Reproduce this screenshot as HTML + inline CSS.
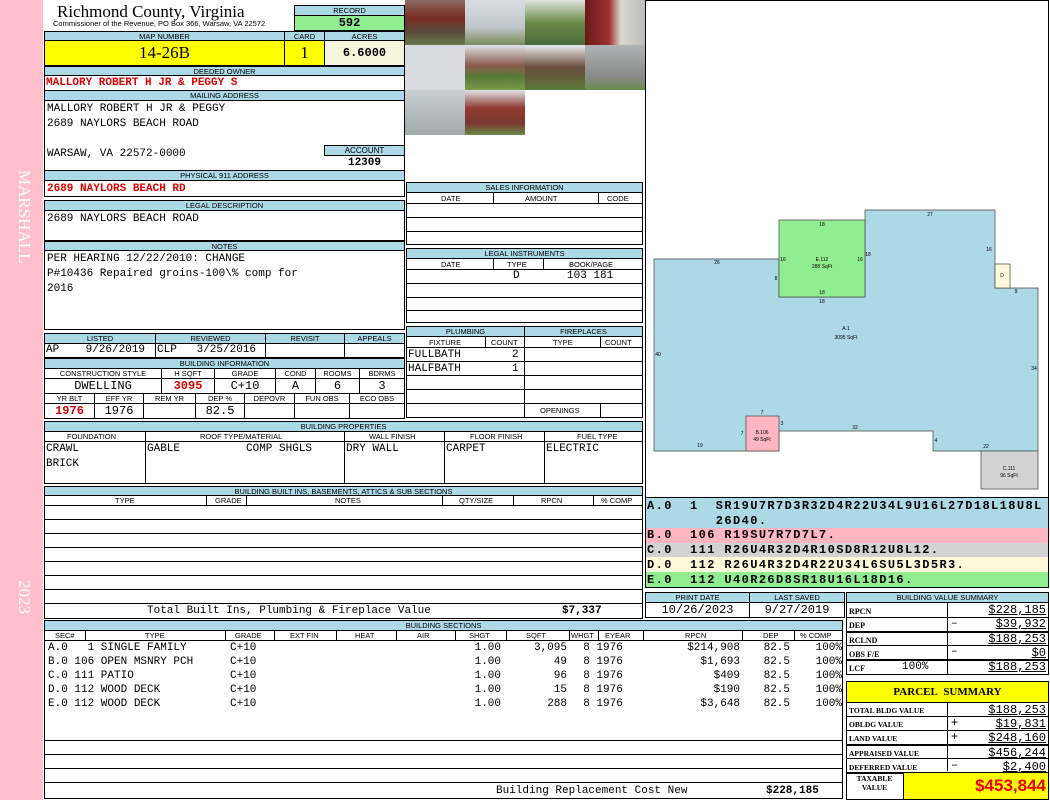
<!DOCTYPE html>
<html><head><meta charset="utf-8"><style>
*{box-sizing:border-box;margin:0;padding:0}
body{width:1050px;height:800px;position:relative;background:#fff;font-family:"Liberation Mono",monospace;overflow:hidden;color:#000}
div{position:absolute}
.h{background:#add8e6;border:1px solid #000;font:7.5px "Liberation Sans",sans-serif;text-align:center;line-height:9px;white-space:nowrap;overflow:hidden}
.b{border:1px solid #000;background:#fff}
.t{font-size:11px;white-space:nowrap;line-height:14px}
.r{color:#d00;font-weight:bold}
.s{font:7.5px "Liberation Sans",sans-serif;white-space:nowrap}
.ln{border-bottom:1px solid #000;left:0;right:0;height:0}
.vl{border-left:1px solid #000;top:0;bottom:0;width:0}
</style></head><body>
<div style="left:0;top:0;width:43px;height:800px;background:#ffc0cb"></div>
<div style="left:10px;top:170px;width:24px;color:#fff;font:17px 'Liberation Serif',serif;writing-mode:vertical-rl">MARSHALL</div>
<div style="left:10px;top:580px;width:24px;color:#fff;font:17px 'Liberation Serif',serif;writing-mode:vertical-rl">2023</div>

<div style="left:57px;top:2px;font:17px 'Liberation Serif',serif">Richmond County, Virginia</div>
<div class="s" style="left:53px;top:19px;font-size:7.5px">Commissioner of the Revenue, PO Box 366, Warsaw, VA 22572</div>
<div class="h" style="left:294px;top:5px;width:111px;height:11px">RECORD</div>
<div style="left:294px;top:15px;width:111px;height:16px;background:#90ee90;border:1px solid #000;text-align:center;font-weight:bold;font-size:12px;line-height:14px">592</div>
<div class="h" style="left:44px;top:31px;width:241px;height:10px">MAP NUMBER</div>
<div class="h" style="left:284px;top:31px;width:41px;height:10px">CARD</div>
<div class="h" style="left:324px;top:31px;width:81px;height:10px">ACRES</div>
<div style="left:44px;top:40px;width:241px;height:26px;background:#ff0;border:1px solid #000;text-align:center;font:17px/24px 'Liberation Serif',serif">14-26B</div>
<div style="left:284px;top:40px;width:41px;height:26px;background:#ff0;border:1px solid #000;text-align:center;font:17px/24px 'Liberation Serif',serif">1</div>
<div style="left:324px;top:40px;width:81px;height:26px;background:#f5f5dc;border:1px solid #000;text-align:center;font-weight:bold;font-size:12px;line-height:24px">6.6000</div>
<div class="h" style="left:44px;top:66px;width:361px;height:10px">DEEDED OWNER</div>
<div class="b" style="left:44px;top:75px;width:361px;height:16px"></div>
<div class="t r" style="left:46px;top:76px">MALLORY ROBERT H JR &amp; PEGGY S</div>
<div class="h" style="left:44px;top:90px;width:361px;height:11px">MAILING ADDRESS</div>
<div class="b" style="left:44px;top:100px;width:361px;height:71px"></div>
<div class="t" style="left:47px;top:102px">MALLORY ROBERT H JR &amp; PEGGY</div>
<div class="t" style="left:47px;top:117px">2689 NAYLORS BEACH ROAD</div>
<div class="t" style="left:47px;top:147px">WARSAW, VA 22572-0000</div>
<div class="h" style="left:324px;top:145px;width:81px;height:11px;font-size:8px">ACCOUNT</div>
<div class="t" style="left:324px;top:156px;width:81px;text-align:center;font-weight:bold">12309</div>
<div class="h" style="left:44px;top:170px;width:361px;height:11px">PHYSICAL 911 ADDRESS</div>
<div class="b" style="left:44px;top:180px;width:361px;height:17px"></div>
<div class="t r" style="left:47px;top:182px">2689 NAYLORS BEACH RD</div>
<div class="h" style="left:44px;top:200px;width:361px;height:11px">LEGAL DESCRIPTION</div>
<div class="b" style="left:44px;top:210px;width:361px;height:31px"></div>
<div class="t" style="left:47px;top:212px">2689 NAYLORS BEACH ROAD</div>
<div class="h" style="left:44px;top:241px;width:361px;height:10px">NOTES</div>
<div class="b" style="left:44px;top:250px;width:361px;height:80px"></div>
<div class="t" style="left:47px;top:252px;line-height:15px">PER HEARING 12/22/2010: CHANGE<br>P#10436 Repaired groins-100\% comp for<br>2016</div>

<div class="h" style="left:44px;top:333px;width:112px;height:11px">LISTED</div>
<div class="h" style="left:155px;top:333px;width:111px;height:11px">REVIEWED</div>
<div class="h" style="left:265px;top:333px;width:80px;height:11px">REVISIT</div>
<div class="h" style="left:344px;top:333px;width:61px;height:11px">APPEALS</div>
<div class="b" style="left:44px;top:343px;width:112px;height:15px"></div>
<div class="b" style="left:155px;top:343px;width:111px;height:15px"></div>
<div class="b" style="left:265px;top:343px;width:80px;height:15px"></div>
<div class="b" style="left:344px;top:343px;width:61px;height:15px"></div>
<div class="t" style="left:46px;top:343px">AP&nbsp;&nbsp;&nbsp;&nbsp;9/26/2019</div>
<div class="t" style="left:157px;top:343px">CLP&nbsp;&nbsp;&nbsp;3/25/2016</div>

<div class="h" style="left:44px;top:358px;width:361px;height:11px">BUILDING INFORMATION</div>
<div class="h" style="left:44px;top:368px;width:118px;height:11px;background:#fff">CONSTRUCTION STYLE</div>
<div class="h" style="left:161px;top:368px;width:54px;height:11px;background:#fff">H SQFT</div>
<div class="h" style="left:214px;top:368px;width:62px;height:11px;background:#fff">GRADE</div>
<div class="h" style="left:275px;top:368px;width:41px;height:11px;background:#fff">COND</div>
<div class="h" style="left:315px;top:368px;width:45px;height:11px;background:#fff">ROOMS</div>
<div class="h" style="left:359px;top:368px;width:46px;height:11px;background:#fff">BDRMS</div>
<div class="b" style="left:44px;top:378px;width:118px;height:16px;text-align:center;font-size:12px">DWELLING</div>
<div class="b r" style="left:161px;top:378px;width:54px;height:16px;text-align:center;font-size:12px">3095</div>
<div class="b" style="left:214px;top:378px;width:62px;height:16px;text-align:center;font-size:12px">C+10</div>
<div class="b" style="left:275px;top:378px;width:41px;height:16px;text-align:center;font-size:12px">A</div>
<div class="b" style="left:315px;top:378px;width:45px;height:16px;text-align:center;font-size:12px">6</div>
<div class="b" style="left:359px;top:378px;width:46px;height:16px;text-align:center;font-size:12px">3</div>
<div class="h" style="left:44px;top:393px;width:51px;height:11px;background:#fff">YR BLT</div>
<div class="h" style="left:94px;top:393px;width:50px;height:11px;background:#fff">EFF YR</div>
<div class="h" style="left:143px;top:393px;width:53px;height:11px;background:#fff">REM YR</div>
<div class="h" style="left:195px;top:393px;width:50px;height:11px;background:#fff">DEP %</div>
<div class="h" style="left:244px;top:393px;width:51px;height:11px;background:#fff">DEPOVR</div>
<div class="h" style="left:294px;top:393px;width:56px;height:11px;background:#fff">FUN OBS</div>
<div class="h" style="left:349px;top:393px;width:56px;height:11px;background:#fff">ECO OBS</div>
<div class="b r" style="left:44px;top:403px;width:51px;height:16px;text-align:center;font-size:12px">1976</div>
<div class="b" style="left:94px;top:403px;width:50px;height:16px;text-align:center;font-size:12px">1976</div>
<div class="b" style="left:143px;top:403px;width:53px;height:16px"></div>
<div class="b" style="left:195px;top:403px;width:50px;height:16px;text-align:center;font-size:12px">82.5</div>
<div class="b" style="left:244px;top:403px;width:51px;height:16px"></div>
<div class="b" style="left:294px;top:403px;width:56px;height:16px"></div>
<div class="b" style="left:349px;top:403px;width:56px;height:16px"></div>

<div style="left:405px;top:0;width:60px;height:45px;background:linear-gradient(#8a6a60,#7a2a22 40%,#5a4a3a 70%,#6a7a4a)"></div>
<div style="left:465px;top:0;width:60px;height:45px;background:linear-gradient(#d8dde0,#c0c8cc 60%,#7a8a5a)"></div>
<div style="left:525px;top:0;width:60px;height:45px;background:linear-gradient(#e0e4e0,#6a8a4a 50%,#4a6a3a)"></div>
<div style="left:585px;top:0;width:60px;height:45px;background:linear-gradient(90deg,#6a1a1a,#a03030 40%,#d8d8d0 60%,#bbb)"></div>
<div style="left:405px;top:45px;width:60px;height:45px;background:#d8dce0"></div>
<div style="left:465px;top:45px;width:60px;height:45px;background:linear-gradient(#dde4ea,#8a5a4a 45%,#5a7a3a 70%,#7a9a4a)"></div>
<div style="left:525px;top:45px;width:60px;height:45px;background:linear-gradient(#e8ecef,#6a4a3a 50%,#5a7a3a)"></div>
<div style="left:585px;top:45px;width:60px;height:45px;background:linear-gradient(#b0b4b4,#8a8a8a 70%,#6a8a4a)"></div>
<div style="left:405px;top:90px;width:60px;height:45px;background:linear-gradient(#c8d0d4,#a0a8a8)"></div>
<div style="left:465px;top:90px;width:60px;height:45px;background:linear-gradient(#e0e4e8,#903a30 40%,#7a3a30 75%,#6a8a4a)"></div>

<div class="h" style="left:406px;top:182px;width:237px;height:11px">SALES INFORMATION</div>
<div class="b" style="left:406px;top:192px;width:237px;height:53px">
<div class="ln" style="top:10px"></div><div class="ln" style="top:24px"></div><div class="ln" style="top:38px"></div>
<div class="vl" style="left:86px;height:10px;bottom:auto"></div><div class="vl" style="left:191px;height:10px;bottom:auto"></div>
<div class="s" style="left:34px;top:1px">DATE</div><div class="s" style="left:118px;top:1px">AMOUNT</div><div class="s" style="left:200px;top:1px">CODE</div></div>
<div class="h" style="left:406px;top:248px;width:237px;height:11px">LEGAL INSTRUMENTS</div>
<div class="b" style="left:406px;top:258px;width:237px;height:65px">
<div class="ln" style="top:10px"></div><div class="ln" style="top:24px"></div><div class="ln" style="top:38px"></div><div class="ln" style="top:51px"></div>
<div class="vl" style="left:86px;height:10px;bottom:auto"></div><div class="vl" style="left:136px;height:10px;bottom:auto"></div>
<div class="s" style="left:34px;top:1px">DATE</div><div class="s" style="left:100px;top:1px">TYPE</div><div class="s" style="left:162px;top:1px">BOOK/PAGE</div>
<div class="t" style="left:106px;top:10px">D</div><div class="t" style="left:160px;top:10px">103 181</div></div>

<div class="h" style="left:406px;top:326px;width:119px;height:11px">PLUMBING</div>
<div class="h" style="left:524px;top:326px;width:119px;height:11px">FIREPLACES</div>
<div class="b" style="left:406px;top:336px;width:237px;height:82px">
<div class="ln" style="top:10px"></div><div class="ln" style="top:24px"></div><div class="ln" style="top:38px"></div><div class="ln" style="top:52px"></div><div class="ln" style="top:66px"></div>
<div class="vl" style="left:117px"></div><div class="vl" style="left:78px;height:10px;bottom:auto"></div><div class="vl" style="left:193px;height:10px;bottom:auto"></div><div class="vl" style="left:193px;top:66px"></div>
<div class="s" style="left:22px;top:1px">FIXTURE</div><div class="s" style="left:84px;top:1px">COUNT</div><div class="s" style="left:146px;top:1px">TYPE</div><div class="s" style="left:198px;top:1px">COUNT</div>
<div class="t" style="left:1px;top:11px">FULLBATH</div><div class="t" style="left:105px;top:11px">2</div>
<div class="t" style="left:1px;top:25px">HALFBATH</div><div class="t" style="left:105px;top:25px">1</div>
<div class="s" style="left:133px;top:69px">OPENINGS</div></div>

<div class="h" style="left:44px;top:421px;width:599px;height:11px">BUILDING PROPERTIES</div>
<div class="b" style="left:44px;top:431px;width:599px;height:53px">
<div class="ln" style="top:9px"></div>
<div class="vl" style="left:100px"></div><div class="vl" style="left:299px"></div><div class="vl" style="left:399px"></div><div class="vl" style="left:499px"></div>
<div class="s" style="left:22px;top:0">FOUNDATION</div><div class="s" style="left:155px;top:0">ROOF TYPE/MATERIAL</div><div class="s" style="left:324px;top:0">WALL FINISH</div><div class="s" style="left:425px;top:0">FLOOR FINISH</div><div class="s" style="left:532px;top:0">FUEL TYPE</div>
<div class="t" style="left:1px;top:10px;line-height:15px">CRAWL<br>BRICK</div>
<div class="t" style="left:102px;top:10px">GABLE</div><div class="t" style="left:201px;top:10px">COMP SHGLS</div>
<div class="t" style="left:301px;top:10px">DRY WALL</div><div class="t" style="left:401px;top:10px">CARPET</div><div class="t" style="left:501px;top:10px">ELECTRIC</div></div>

<div class="h" style="left:44px;top:486px;width:599px;height:10px">BUILDING BUILT INS, BASEMENTS, ATTICS &amp; SUB SECTIONS</div>
<div class="b" style="left:44px;top:495px;width:599px;height:124px">
<div class="ln" style="top:9px"></div><div class="ln" style="top:23px"></div><div class="ln" style="top:37px"></div><div class="ln" style="top:51px"></div><div class="ln" style="top:65px"></div><div class="ln" style="top:79px"></div><div class="ln" style="top:93px"></div><div class="ln" style="top:107px"></div>
<div class="vl" style="left:161px;height:9px;bottom:auto"></div><div class="vl" style="left:201px;height:9px;bottom:auto"></div><div class="vl" style="left:397px;height:9px;bottom:auto"></div><div class="vl" style="left:468px;height:9px;bottom:auto"></div><div class="vl" style="left:548px;height:9px;bottom:auto"></div>
<div class="s" style="left:70px;top:0">TYPE</div><div class="s" style="left:170px;top:0">GRADE</div><div class="s" style="left:290px;top:0">NOTES</div><div class="s" style="left:414px;top:0">QTY/SIZE</div><div class="s" style="left:496px;top:0">RPCN</div><div class="s" style="left:556px;top:0">% COMP</div>
<div class="t" style="left:102px;top:108px">Total Built Ins, Plumbing &amp; Fireplace Value</div>
<div class="t" style="left:517px;top:108px;font-weight:bold">$7,337</div></div>

<div class="h" style="left:44px;top:620px;width:799px;height:11px">BUILDING SECTIONS</div>
<div class="b" style="left:44px;top:630px;width:799px;height:169px">
<div class="ln" style="top:9px"></div><div class="ln" style="top:151px"></div>
<div class="ln" style="top:109px"></div><div class="ln" style="top:123px"></div><div class="ln" style="top:137px"></div>
<div class="vl" style="left:40px;height:9px;bottom:auto"></div><div class="vl" style="left:180px;height:9px;bottom:auto"></div><div class="vl" style="left:229px;height:9px;bottom:auto"></div><div class="vl" style="left:291px;height:9px;bottom:auto"></div><div class="vl" style="left:351px;height:9px;bottom:auto"></div><div class="vl" style="left:410px;height:9px;bottom:auto"></div><div class="vl" style="left:461px;height:9px;bottom:auto"></div><div class="vl" style="left:524px;height:9px;bottom:auto"></div><div class="vl" style="left:553px;height:9px;bottom:auto"></div><div class="vl" style="left:598px;height:9px;bottom:auto"></div><div class="vl" style="left:697px;height:9px;bottom:auto"></div><div class="vl" style="left:749px;height:9px;bottom:auto"></div>
<div class="s" style="left:10px;top:0">SEC#</div><div class="s" style="left:100px;top:0">TYPE</div><div class="s" style="left:190px;top:0">GRADE</div><div class="s" style="left:245px;top:0">EXT FIN</div><div class="s" style="left:310px;top:0">HEAT</div><div class="s" style="left:372px;top:0">AIR</div><div class="s" style="left:424px;top:0">SHGT</div><div class="s" style="left:481px;top:0">SQFT</div><div class="s" style="left:526px;top:0">WHGT</div><div class="s" style="left:560px;top:0">EYEAR</div><div class="s" style="left:640px;top:0">RPCN</div><div class="s" style="left:718px;top:0">DEP</div><div class="s" style="left:755px;top:0">% COMP</div>
<div class="t" style="left:3px;top:10px;line-height:14px;white-space:pre">A.0   1 SINGLE FAMILY
B.0 106 OPEN MSNRY PCH
C.0 111 PATIO
D.0 112 WOOD DECK
E.0 112 WOOD DECK</div>
<div class="t" style="left:185px;top:10px;line-height:14px">C+10<br>C+10<br>C+10<br>C+10<br>C+10</div>
<div class="t" style="left:420px;top:10px;width:36px;text-align:right;line-height:14px">1.00<br>1.00<br>1.00<br>1.00<br>1.00</div>
<div class="t" style="left:460px;top:10px;width:62px;text-align:right;line-height:14px">3,095<br>49<br>96<br>15<br>288</div>
<div class="t" style="left:525px;top:10px;line-height:14px;white-space:pre">  8 1976
  8 1976
  8 1976
  8 1976
  8 1976</div>
<div class="t" style="left:600px;top:10px;width:95px;text-align:right;line-height:14px">$214,908<br>$1,693<br>$409<br>$190<br>$3,648</div>
<div class="t" style="left:700px;top:10px;width:45px;text-align:right;line-height:14px">82.5<br>82.5<br>82.5<br>82.5<br>82.5</div>
<div class="t" style="left:750px;top:10px;width:47px;text-align:right;line-height:14px">100%<br>100%<br>100%<br>100%<br>100%</div>
<div class="t" style="left:451px;top:153px">Building Replacement Cost New</div>
<div class="t" style="left:721px;top:153px;font-weight:bold">$228,185</div></div>

<div class="b" style="left:645px;top:0;width:404px;height:498px"></div>
<svg style="position:absolute;left:0;top:0" width="1050" height="500" font-family="Liberation Sans" font-size="5">
<polygon points="654,259 779,259 779,297 865,297 865,210 995,210 995,288 1038,288 1038,451 933,451 933,431 779,431 779,451 654,451" fill="#add8e6" stroke="#444" stroke-width=".7"/>
<rect x="779" y="220" width="86" height="77" fill="#90ee90" stroke="#444" stroke-width=".7"/>
<rect x="746" y="416" width="33" height="35" fill="#ffb6c1" stroke="#444" stroke-width=".7"/>
<rect x="995" y="264" width="15" height="24" fill="#fffadc" stroke="#444" stroke-width=".7"/>
<rect x="981" y="451" width="57" height="38" fill="#d3d3d3" stroke="#444" stroke-width=".7"/>
<g text-anchor="middle"><text x="822" y="261">E.112</text><text x="822" y="268">288 SqFt</text><text x="846" y="330">A.1</text><text x="846" y="339">3095 SqFt</text><text x="762" y="434">B.106</text><text x="762" y="441">49 SqFt</text><text x="1009" y="470">C.111</text><text x="1009" y="477">96 SqFt</text><text x="1002" y="277">D</text>
<text x="717" y="264">26</text><text x="822" y="226">18</text><text x="822" y="294">18</text><text x="822" y="303">18</text><text x="930" y="216">27</text><text x="989" y="251">16</text><text x="1016" y="293">9</text><text x="658" y="356">40</text><text x="1034" y="370">34</text><text x="700" y="447">19</text><text x="855" y="429">32</text><text x="986" y="448">22</text><text x="762" y="414">7</text><text x="868" y="256">18</text><text x="776" y="280">8</text><text x="783" y="261">16</text><text x="860" y="261">16</text><text x="742" y="435">7</text><text x="782" y="425">3</text><text x="936" y="442">4</text></g>
</svg>

<div class="b" style="left:645px;top:497px;width:404px;height:91px;font-weight:bold">
<div style="left:0;top:0;width:402px;height:30px;background:#add8e6"></div>
<div style="left:0;top:30px;width:402px;height:15px;background:#ffb6c1"></div>
<div style="left:0;top:45px;width:402px;height:14px;background:#d3d3d3"></div>
<div style="left:0;top:59px;width:402px;height:15px;background:#fffadc"></div>
<div style="left:0;top:74px;width:402px;height:15px;background:#90ee90"></div>
<div style="left:1px;top:1px;line-height:14.7px;white-space:pre;font-size:12px;letter-spacing:1.4px">A.0  1  SR19U7R7D3R32D4R22U34L9U16L27D18L18U8L
        26D40.
B.0  106 R19SU7R7D7L7.
C.0  111 R26U4R32D4R10SD8R12U8L12.
D.0  112 R26U4R32D4R22U34L6SU5L3D5R3.
E.0  112 U40R26D8SR18U16L18D16.</div></div>

<div class="h" style="left:645px;top:592px;width:105px;height:11px">PRINT DATE</div>
<div class="h" style="left:749px;top:592px;width:96px;height:11px">LAST SAVED</div>
<div class="b" style="left:645px;top:602px;width:105px;height:16px;text-align:center;font-size:12px">10/26/2023</div>
<div class="b" style="left:749px;top:602px;width:96px;height:16px;text-align:center;font-size:12px">9/27/2019</div>

<div class="h" style="left:846px;top:592px;width:203px;height:11px">BUILDING VALUE SUMMARY</div>
<div class="b" style="left:846px;top:602px;width:203px;height:73px;font-size:9px">
<div class="ln" style="top:14px"></div><div class="ln" style="top:28px;border-width:2px"></div><div class="ln" style="top:42px"></div><div class="ln" style="top:56px;border-width:2px"></div>
<div class="vl" style="left:100px"></div>
<div style="left:2px;top:2px;line-height:14.3px;font-family:'Liberation Serif',serif;font-weight:bold;font-size:8px">RPCN<br>DEP<br>RCLND<br>OBS F/E<br>LCF</div>
<div style="left:55px;top:58px;font-size:11px">100%</div>
<div style="left:104px;top:14px;font-size:11px;line-height:14px">–<br><br>–</div>
<div style="right:2px;top:0;text-align:right;font-size:12px;line-height:14.3px;text-decoration:underline">$228,185<br>$39,932<br>$188,253<br>$0<br>$188,253</div></div>

<div style="left:846px;top:681px;width:203px;height:22px;background:#ff0;border:1px solid #000;text-align:center;font:bold 11px/20px 'Liberation Serif',serif">PARCEL&nbsp;&nbsp;SUMMARY</div>
<div class="b" style="left:846px;top:702px;width:203px;height:98px">
<div class="ln" style="top:13px"></div><div class="ln" style="top:27px"></div><div class="ln" style="top:41px;border-width:2px"></div><div class="ln" style="top:55px"></div><div class="ln" style="top:69px;border-width:2px"></div>
<div class="vl" style="left:100px;bottom:28px"></div>
<div style="left:2px;top:1px;line-height:14.2px;font-family:'Liberation Serif',serif;font-weight:bold;font-size:7.5px">TOTAL BLDG VALUE<br>OBLDG VALUE<br>LAND VALUE<br>APPRAISED VALUE<br>DEFERRED VALUE</div>
<div style="left:104px;top:13px;font-size:12px;line-height:14px">+<br>+<br><br>–</div>
<div style="right:2px;top:0;text-align:right;font-size:12px;line-height:14.2px;text-decoration:underline">$188,253<br>$19,831<br>$248,160<br>$456,244<br>$2,400</div>
<div style="left:0;top:71px;width:55px;text-align:center;font:bold 7.5px/9px 'Liberation Serif',serif">TAXABLE<br>VALUE</div>
<div style="left:56px;top:70px;width:145px;height:26px;background:#ff0;border-left:1px solid #000;text-align:right;color:#e00;font:bold 17px/25px 'Liberation Sans',sans-serif;padding-right:2px">$453,844</div></div>
</body></html>
